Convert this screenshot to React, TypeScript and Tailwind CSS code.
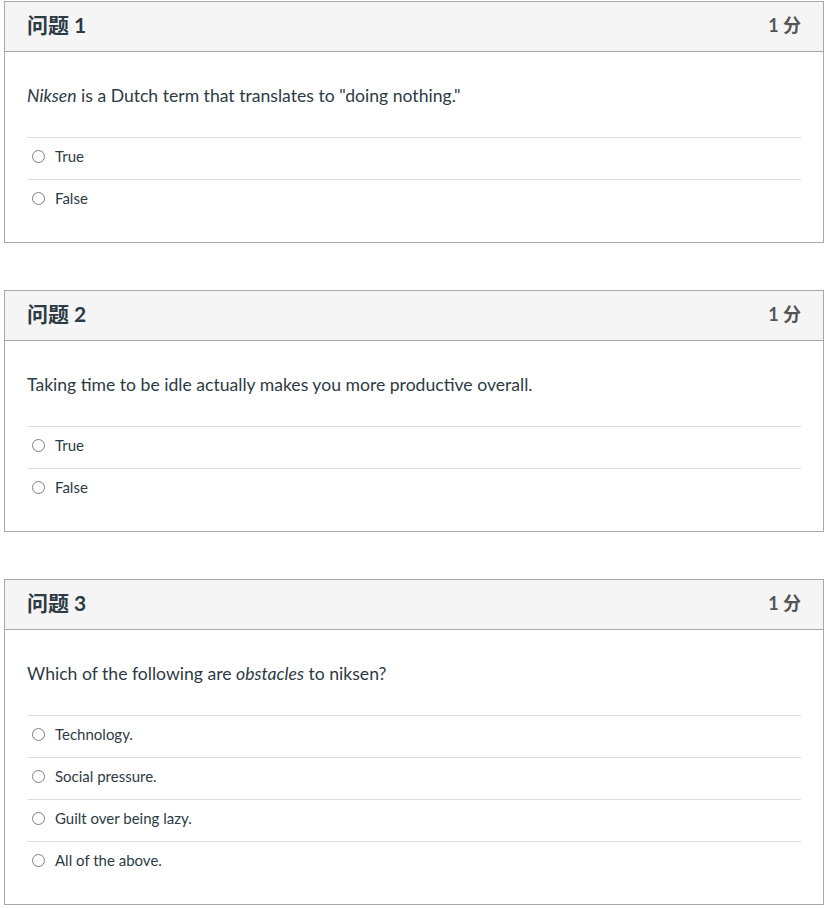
import type { ReactNode } from 'react';

type Question = {
    id: number;
    points: string;
    text: ReactNode;
    answers: string[];
};

const questions: Question[] = [
    {
        id: 1,
        points: '1 分',
        text: (
            <>
                <em>Niksen</em> is a Dutch term that translates to "doing nothing."
            </>
        ),
        answers: ['True', 'False'],
    },
    {
        id: 2,
        points: '1 分',
        text: 'Taking time to be idle actually makes you more productive overall.',
        answers: ['True', 'False'],
    },
    {
        id: 3,
        points: '1 分',
        text: (
            <>
                Which of the following are <em>obstacles</em> to niksen?
            </>
        ),
        answers: ['Technology.', 'Social pressure.', 'Guilt over being lazy.', 'All of the above.'],
    },
];

function QuestionCard({ q }: { q: Question }) {
    return (
        <div className="w-[820px] border border-[#a8a8a8] bg-white">
            {/* Header */}
            <div className="flex h-[50px] items-center justify-between border-b border-[#a8a8a8] bg-[#f5f5f5] px-[22px] pb-[3px]">
                <h2 className="text-[21px] font-bold text-[#2d3b45]">问题 {q.id}</h2>
                <span className="text-[18px] font-bold text-[#555555]">{q.points}</span>
            </div>

            {/* Body */}
            <div className="px-[22px] pb-[21px] pt-[32px]">
                <p className="text-[17.6px] leading-6 text-[#2d3b45]">{q.text}</p>
                <div className="mt-[29px]">
                    {q.answers.map((a) => (
                        <label key={a} className="flex h-[42px] items-center border-t border-[#dddddd] pb-[5px] pl-[5px]">
                            <span className="h-[13px] w-[13px] rounded-full border border-[#808080] bg-white" />
                            <span className="ml-[10px] text-[15px] text-[#2d3b45]">{a}</span>
                        </label>
                    ))}
                </div>
            </div>
        </div>
    );
}

export default function App() {
    return (
        <div
            className="min-h-screen bg-white pl-[4px] pt-px"
            style={{ fontFamily: 'Lato, "Noto Sans CJK SC", sans-serif' }}
        >
            <div className="flex flex-col gap-[47px]">
                {questions.map((q) => (
                    <QuestionCard key={q.id} q={q} />
                ))}
            </div>
        </div>
    );
}
